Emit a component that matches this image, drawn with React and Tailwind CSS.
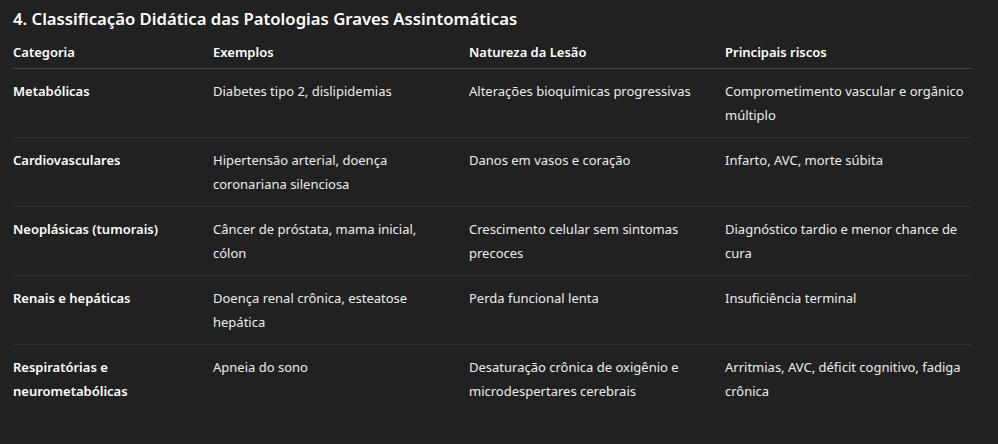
import React from "react";

const rows = [
  ["Metabólicas", "Diabetes tipo 2, dislipidemias", "Alterações bioquímicas progressivas", "Comprometimento vascular e orgânico múltiplo"],
  ["Cardiovasculares", "Hipertensão arterial, doença coronariana silenciosa", "Danos em vasos e coração", "Infarto, AVC, morte súbita"],
  ["Neoplásicas (tumorais)", "Câncer de próstata, mama inicial, cólon", "Crescimento celular sem sintomas precoces", "Diagnóstico tardio e menor chance de cura"],
  ["Renais e hepáticas", "Doença renal crônica, esteatose hepática", "Perda funcional lenta", "Insuficiência terminal"],
  ["Respiratórias e neurometabólicas", "Apneia do sono", "Desaturação crônica de oxigênio e microdespertares cerebrais", "Arritmias, AVC, déficit cognitivo, fadiga crônica"],
];

export default function App() {
  return (
    <div
      className="w-[998px] h-[444px] bg-[#212121] text-[#ececec] px-[13px] pt-[5px] overflow-hidden"
      style={{ fontFamily: '"Noto Sans", "Open Sans", sans-serif' }}
    >
      {/* --- Title --- */}
      <h3 className="text-[16.7px] leading-7 font-semibold text-white mb-[7px]">
        4. Classificação Didática das Patologias Graves Assintomáticas
      </h3>

      {/* --- Table --- */}
      <table className="w-[959px] table-fixed border-collapse text-[13px] leading-6">
        <colgroup>
          <col className="w-[200px]" />
          <col className="w-[256px]" />
          <col className="w-[256px]" />
          <col className="w-[247px]" />
        </colgroup>
        <thead>
          <tr className="border-b border-[#464646]">
            {["Categoria", "Exemplos", "Natureza da Lesão", "Principais riscos"].map((h) => (
              <th key={h} className="text-left font-semibold text-white pb-[4px] pr-4 align-top">
                {h}
              </th>
            ))}
          </tr>
        </thead>
        <tbody>
          {rows.map((r, i) => (
            <tr key={i} className={i < rows.length - 1 ? "border-b border-[#303030]" : ""}>
              <td className="py-[10px] pr-4 align-top font-semibold text-white">{r[0]}</td>
              <td className="py-[10px] pr-4 align-top">{r[1]}</td>
              <td className="py-[10px] pr-4 align-top">{r[2]}</td>
              <td className="py-[10px] pr-0 align-top">{r[3]}</td>
            </tr>
          ))}
        </tbody>
      </table>
    </div>
  );
}
